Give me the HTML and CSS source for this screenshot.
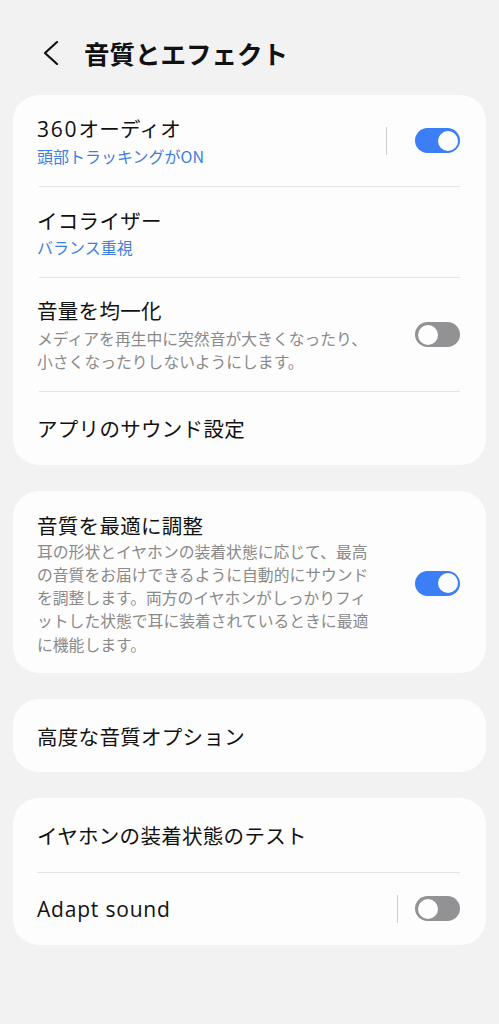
FILE: index.html
```html
<!DOCTYPE html>
<html lang="ja">
<head>
<meta charset="utf-8">
<title>音質とエフェクト</title>
<link rel="stylesheet" href="styles.css">
</head>
<body>
<div class="screen">
  <header class="header">
    <svg class="back" width="16" height="24" viewBox="0 0 16 24"><path d="M14 1 L2 12 L14 23" fill="none" stroke="#111" stroke-width="2.2" stroke-linecap="round" stroke-linejoin="round"/></svg>
    <h1 class="title">音質とエフェクト</h1>
  </header>

  <section class="card">
    <div class="row r-two">
      <div class="text">
        <div class="label"><span class="num">360</span>オーディオ</div>
        <div class="sub">頭部トラッキングがON</div>
      </div>
      <div class="vbar vbar-a"></div>
      <div class="toggle on"><span class="thumb"></span></div>
    </div>
    <div class="divider d1"></div>
    <div class="row r-two">
      <div class="text">
        <div class="label">イコライザー</div>
        <div class="sub">バランス重視</div>
      </div>
    </div>
    <div class="divider d1"></div>
    <div class="row r-desc">
      <div class="text">
        <div class="label">音量を均一化</div>
        <div class="desc">メディアを再生中に突然音が大きくなったり、<br>小さくなったりしないようにします。</div>
      </div>
      <div class="toggle off"><span class="thumb"></span></div>
    </div>
    <div class="divider d1"></div>
    <div class="row r-one r-last">
      <div class="text"><div class="label">アプリのサウンド設定</div></div>
    </div>
  </section>

  <section class="card">
    <div class="row r-long">
      <div class="text narrow">
        <div class="label">音質を最適に調整</div>
        <div class="desc">耳の形状とイヤホンの装着状態に応じて、最高<br>の音質をお届けできるように自動的にサウンド<br>を調整します。両方のイヤホンがしっかりフィ<br>ットした状態で耳に装着されているときに最適<br>に機能します。</div>
      </div>
      <div class="toggle on"><span class="thumb"></span></div>
    </div>
  </section>

  <section class="card">
    <div class="row r-single">
      <div class="text"><div class="label">高度な音質オプション</div></div>
    </div>
  </section>

  <section class="card">
    <div class="row r-top">
      <div class="text"><div class="label">イヤホンの装着状態のテスト</div></div>
    </div>
    <div class="divider d2"></div>
    <div class="row r-bottom">
      <div class="text"><div class="label latin">Adapt sound</div></div>
      <div class="vbar vbar-b"></div>
      <div class="toggle off"><span class="thumb"></span></div>
    </div>
  </section>
</div>
</body>
</html>
```

FILE: styles.css
```css
* { box-sizing: border-box; }
html, body { margin: 0; padding: 0; }
body {
  background: #f2f2f2;
  font-family: "Noto Sans CJK JP", "Noto Sans", Roboto, sans-serif;
  color: #111;
}
.screen {
  width: 499px;
  padding: 0 13px;
}
.header {
  height: 95px;
  display: flex;
  align-items: center;
  padding-left: 30px;
  padding-top: 11px;
}
.back { display: block; }
.title {
  margin: 0 0 0 25px;
  font-size: 25.5px;
  font-weight: 700;
  line-height: 32px;
  letter-spacing: 0;
}
.card {
  background: #fdfdfd;
  border-radius: 26px;
  margin-bottom: 26px;
}
.row {
  display: flex;
  align-items: center;
  padding: 0 26px 0 24px;
}
.text { flex: 1; min-width: 0; }
.label {
  font-size: 20.5px;
  line-height: 28px;
  letter-spacing: 0.3px;
  color: #111;
}
.num {
  font-family: "Open Sans", "Noto Sans", sans-serif;
  font-size: 21px;
  letter-spacing: 1.8px;
}
.label.latin {
  font-family: "Open Sans", "Noto Sans", sans-serif;
  font-size: 21px;
  letter-spacing: 0.8px;
}
.sub {
  margin-top: 2px;
  font-size: 16px;
  line-height: 22px;
  color: #3f7fdc;
}
.desc {
  margin-top: 3px;
  font-size: 15.8px;
  line-height: 23.25px;
  color: #8a8a8a;
}
.r-two { padding-top: 19px; padding-bottom: 19px; }
.r-desc { padding-top: 18px; padding-bottom: 17px; }
.r-one { padding-top: 22px; padding-bottom: 23px; }
.r-long { padding-top: 20px; padding-bottom: 17px; }
.r-long .desc { margin-top: 1px; }
.r-single { padding-top: 23px; padding-bottom: 22px; }
.r-top { padding-top: 23px; padding-bottom: 23px; }
.r-bottom { padding-top: 22px; padding-bottom: 22px; }
.divider {
  height: 1px;
  background: #e4e4e4;
}
.d1 { margin: 0 26px 0 26px; }
.d2 { margin: 0 26px 0 24px; }
.vbar {
  width: 1.5px;
  height: 28px;
  background: #cfcfcf;
}
.vbar-a { margin-right: 28px; }
.vbar-b { margin-right: 17px; }
.toggle {
  position: relative;
  width: 45px;
  height: 25px;
  border-radius: 13px;
  flex: none;
}
.toggle.on { background: #3b7ef6; }
.toggle.off { background: #929295; }
.thumb {
  position: absolute;
  top: 2.5px;
  width: 20px;
  height: 20px;
  border-radius: 50%;
  background: #fdfdfd;
}
.toggle.on .thumb { right: 2.5px; }
.toggle.off .thumb { left: 2.5px; }
.narrow { padding-right: 30px; }
```
